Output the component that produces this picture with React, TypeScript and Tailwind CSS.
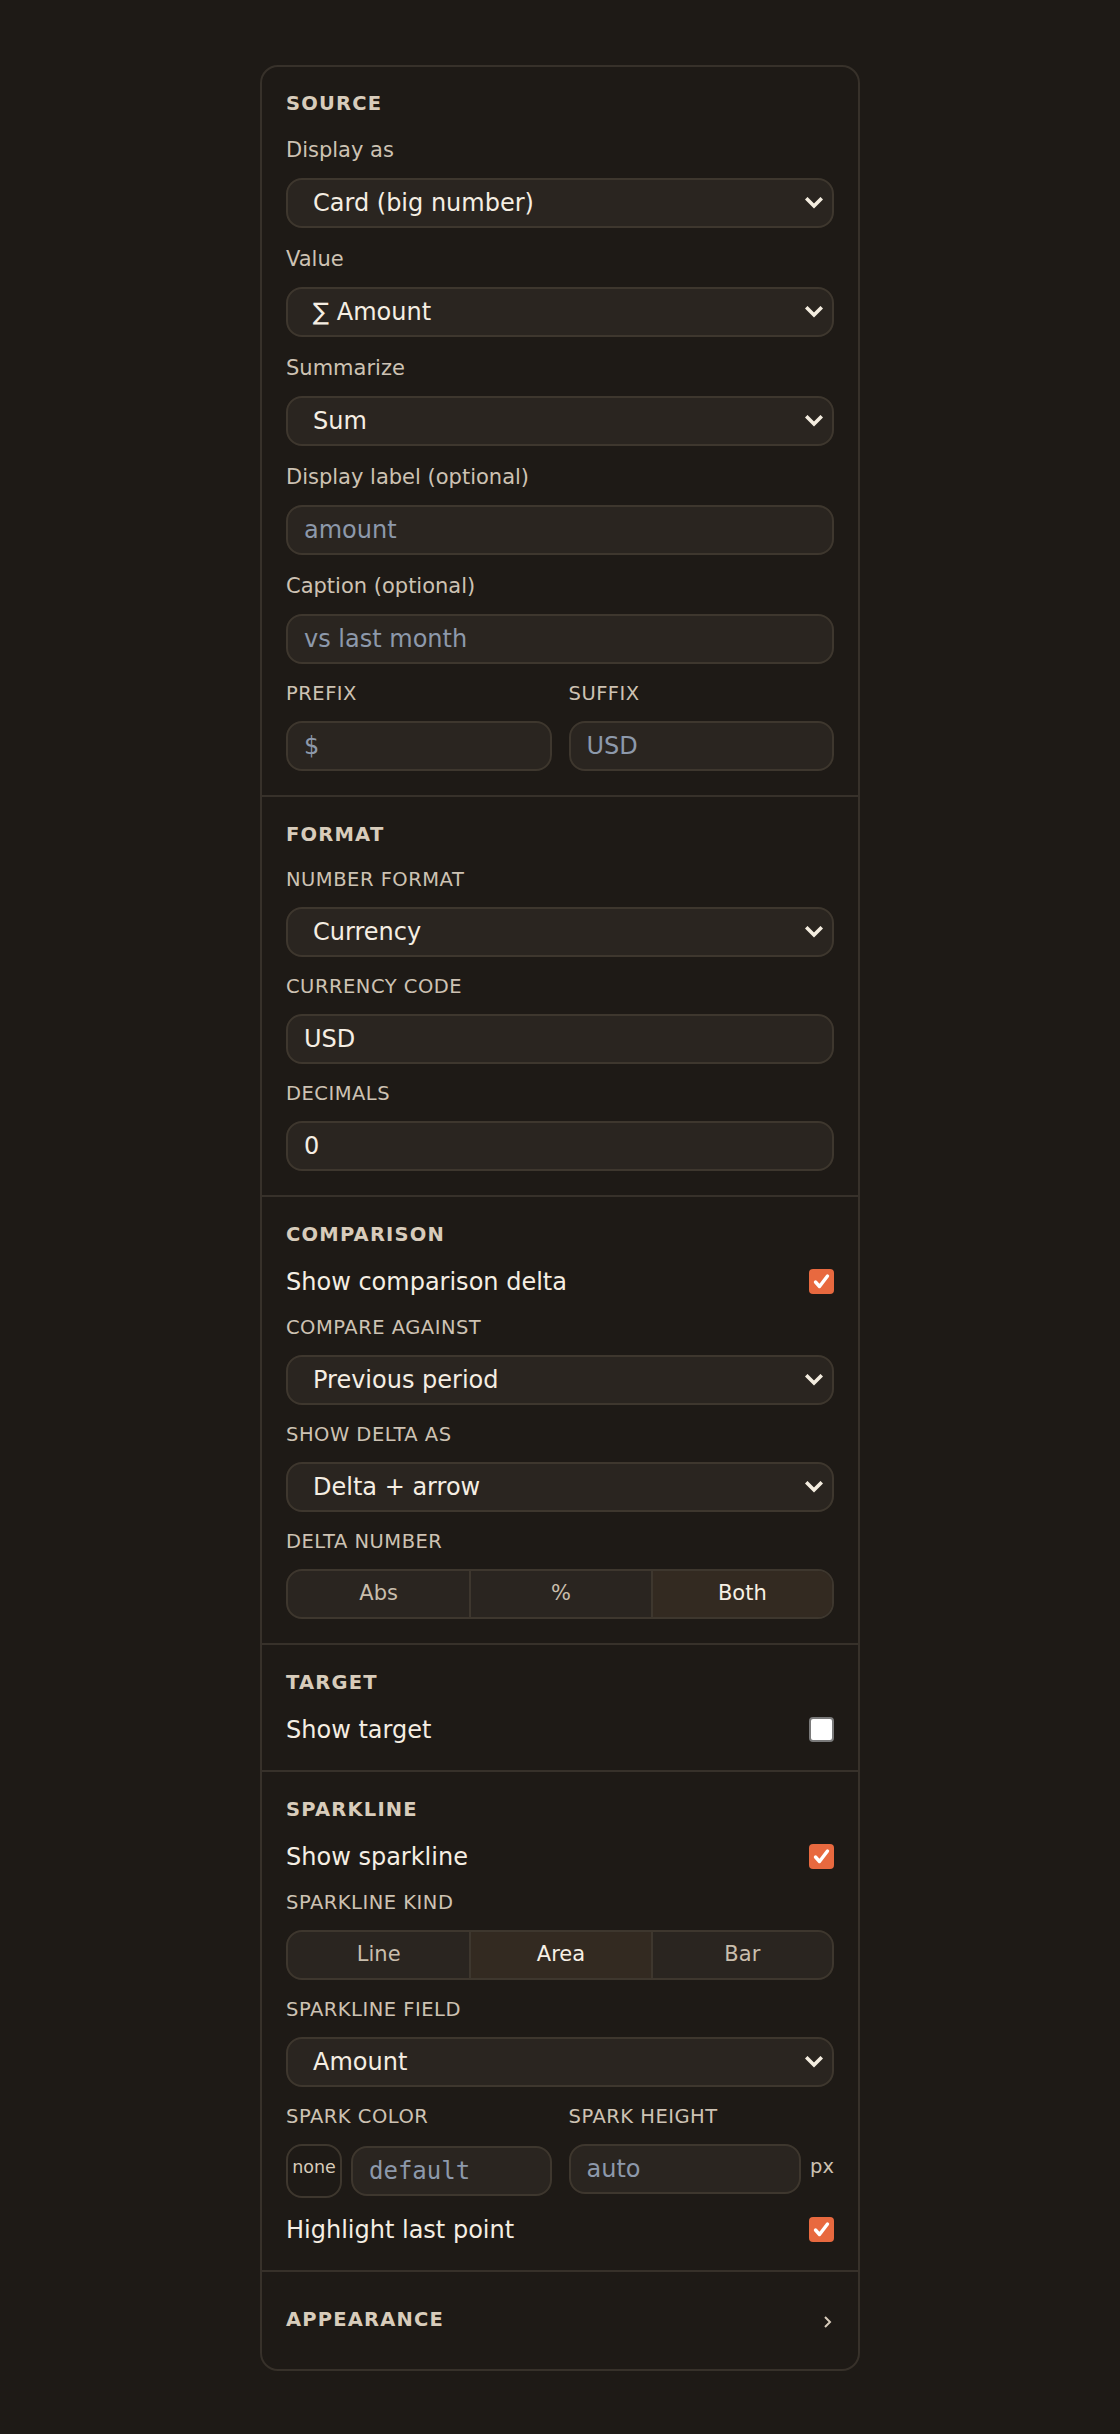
import React from "react";

// Settings panel for a "big number" card widget

const Heading = ({ children }: { children: React.ReactNode }) => (
  <div className="text-[19.5px] leading-[27px] font-bold tracking-[1.2px] text-[#d8ccbb] mb-[2px]">
    {children}
  </div>
);

const Label = ({ children, caps = false }: { children: React.ReactNode; caps?: boolean }) =>
  caps ? (
    <div className="text-[19.5px] leading-[30px] tracking-[0.5px] text-[#cdc2b3]">{children}</div>
  ) : (
    <div className="text-[21px] leading-[32px] text-[#cdc2b3]">{children}</div>
  );

const Select = ({ value }: { value: string }) => (
  <div className="relative flex items-center h-[50px] rounded-[16px] border-2 border-[#3e372e] bg-[#2a2520] pl-[25px] text-[24px] text-[#f5eee3]">
    <span>{value}</span>
    <svg
      className="absolute right-[9px] top-1/2 -translate-y-1/2"
      width="18"
      height="12"
      viewBox="0 0 18 12"
      fill="none"
    >
      <path d="M2.5 2.5 L9 9 L15.5 2.5" stroke="#f3ecdf" strokeWidth="3.6" strokeLinecap="square" />
    </svg>
  </div>
);

const TextInput = ({
  value,
  placeholder,
  mono = false,
  className = "",
}: {
  value?: string;
  placeholder?: string;
  mono?: boolean;
  className?: string;
}) => (
  <input
    readOnly
    value={value ?? ""}
    placeholder={placeholder}
    className={`h-[50px] w-full min-w-0 rounded-[16px] border-2 border-[#3e372e] bg-[#2a2520] px-[16px] text-[24px] text-[#f5eee3] placeholder:text-[#8d99ab] outline-none ${
      mono ? "font-['DejaVu_Sans_Mono',monospace] text-[23px]" : ""
    } ${className}`}
  />
);

const Field = ({ label, caps = false, children }: { label: string; caps?: boolean; children: React.ReactNode }) => (
  <div className="flex flex-col gap-[12px]">
    <Label caps={caps}>{label}</Label>
    {children}
  </div>
);

const Checkbox = ({ checked }: { checked: boolean }) =>
  checked ? (
    <div className="w-[25px] h-[25px] rounded-[4px] bg-[#e8693f] flex items-center justify-center">
      <svg width="19" height="19" viewBox="0 0 19 19" fill="none">
        <path d="M3.5 10 L7.5 14.5 L15.5 4" stroke="#ffffff" strokeWidth="3.4" strokeLinecap="round" strokeLinejoin="round" />
      </svg>
    </div>
  ) : (
    <div className="w-[25px] h-[25px] rounded-[4px] bg-white border-2 border-[#7a7a7a]" />
  );

const CheckRow = ({ label, checked }: { label: string; checked: boolean }) => (
  <div className="flex items-center justify-between h-[33px]">
    <span className="text-[24px] text-[#f5eee3]">{label}</span>
    <Checkbox checked={checked} />
  </div>
);

const Segmented = ({ options, selected }: { options: string[]; selected: string }) => (
  <div className="grid grid-cols-3 h-[50px] rounded-[16px] border-2 border-[#3e372e] bg-[#2a2520] overflow-hidden">
    {options.map((o, i) => (
      <div
        key={o}
        className={`flex items-center justify-center text-[21px] ${i > 0 ? "border-l-2 border-[#3e372e]" : ""} ${
          o === selected ? "bg-[#332a21] text-[#f7f0e5]" : "text-[#c9bead]"
        }`}
      >
        {o}
      </div>
    ))}
  </div>
);

const Section = ({ children, first = false }: { children: React.ReactNode; first?: boolean }) => (
  <div className={`flex flex-col gap-[15px] px-[24px] pb-[24px] border-b-2 border-[#37312a] ${first ? "pt-[23px]" : "pt-[24px]"}`}>
    {children}
  </div>
);

export default function App() {
  return (
    <div className="min-h-screen bg-[#1e1a16] pt-[65px] pb-[67px] font-['DejaVu_Sans',sans-serif]">
      <div className="mx-auto w-[600px] rounded-[18px] border-2 border-[#37312a] bg-[#1e1a16] overflow-hidden">
        <Section first>
          <Heading>SOURCE</Heading>
          <Field label="Display as">
            <Select value="Card (big number)" />
          </Field>
          <Field label="Value">
            <Select value="∑ Amount" />
          </Field>
          <Field label="Summarize">
            <Select value="Sum" />
          </Field>
          <Field label="Display label (optional)">
            <TextInput placeholder="amount" />
          </Field>
          <Field label="Caption (optional)">
            <TextInput placeholder="vs last month" />
          </Field>
          <div className="grid grid-cols-2 gap-[17px]">
            <Field label="PREFIX" caps>
              <TextInput placeholder="$" />
            </Field>
            <Field label="SUFFIX" caps>
              <TextInput placeholder="USD" />
            </Field>
          </div>
        </Section>

        <Section>
          <Heading>FORMAT</Heading>
          <Field label="NUMBER FORMAT" caps>
            <Select value="Currency" />
          </Field>
          <Field label="CURRENCY CODE" caps>
            <TextInput value="USD" />
          </Field>
          <Field label="DECIMALS" caps>
            <TextInput value="0" />
          </Field>
        </Section>

        <Section>
          <Heading>COMPARISON</Heading>
          <CheckRow label="Show comparison delta" checked />
          <Field label="COMPARE AGAINST" caps>
            <Select value="Previous period" />
          </Field>
          <Field label="SHOW DELTA AS" caps>
            <Select value="Delta + arrow" />
          </Field>
          <Field label="DELTA NUMBER" caps>
            <Segmented options={["Abs", "%", "Both"]} selected="Both" />
          </Field>
        </Section>

        <Section>
          <Heading>TARGET</Heading>
          <CheckRow label="Show target" checked={false} />
        </Section>

        <Section>
          <Heading>SPARKLINE</Heading>
          <CheckRow label="Show sparkline" checked />
          <Field label="SPARKLINE KIND" caps>
            <Segmented options={["Line", "Area", "Bar"]} selected="Area" />
          </Field>
          <Field label="SPARKLINE FIELD" caps>
            <Select value="Amount" />
          </Field>
          <div className="grid grid-cols-2 gap-[17px] items-start">
            <Field label="SPARK COLOR" caps>
              <div className="flex items-center gap-[9px]">
                <div className="flex items-center justify-center shrink-0 w-[56px] h-[54px] pb-[8px] rounded-[16px] border-2 border-[#3e372e] text-[17.5px] text-[#d8ccbb]">
                  none
                </div>
                <TextInput placeholder="default" mono />
              </div>
            </Field>
            <Field label="SPARK HEIGHT" caps>
              <div className="flex items-center gap-[9px]">
                <TextInput placeholder="auto" />
                <span className="shrink-0 text-[19.5px] text-[#cdc2b3] pb-[4px]">px</span>
              </div>
            </Field>
          </div>
          <CheckRow label="Highlight last point" checked />
        </Section>

        <div className="flex items-center justify-between px-[24px] pt-[34px] pb-[36px]">
          <span className="text-[19.5px] leading-[27px] font-bold tracking-[1.2px] text-[#d8ccbb]">APPEARANCE</span>
          <svg width="9" height="14" viewBox="0 0 9 14" fill="none" className="mr-[2px] mt-[4px]">
            <path d="M2 2 L7 7 L2 12" stroke="#d8ccbb" strokeWidth="2" />
          </svg>
        </div>
      </div>
    </div>
  );
}
